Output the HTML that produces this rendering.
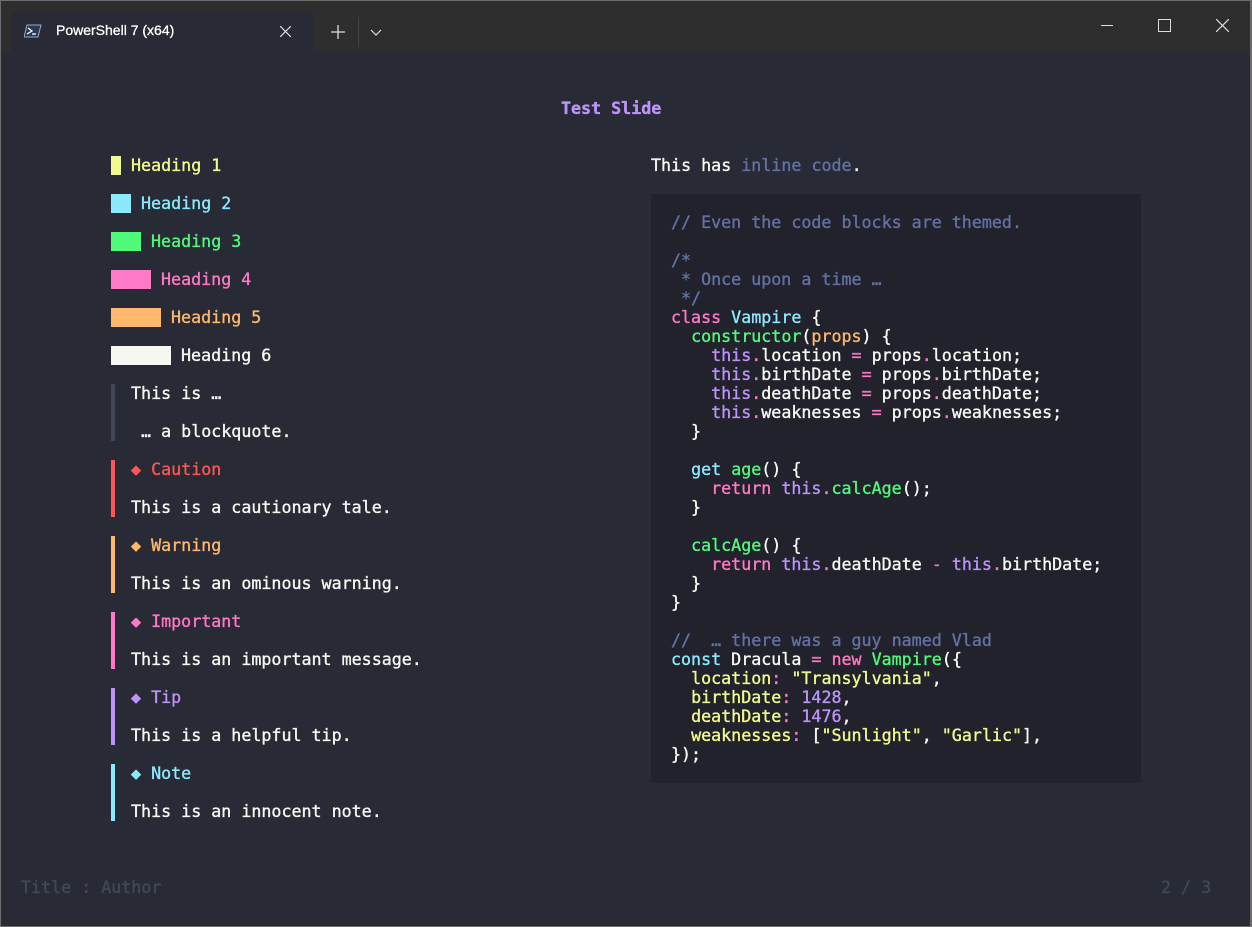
<!DOCTYPE html>
<html><head><meta charset="utf-8"><style>
*{margin:0;padding:0;box-sizing:border-box}
body{width:1252px;height:927px;background:#6e6e6e;overflow:hidden;position:relative;font-family:"Liberation Mono",monospace}
#win{position:absolute;left:1px;top:1px;width:1249px;height:925px;background:#282a36}
#bar{position:absolute;left:0;top:0;width:100%;height:50px;background:#2e2e2e}
#tab{position:absolute;left:10px;top:10px;width:302px;height:40px;background:#282a36;border-radius:8px 8px 0 0}
#tab .t{position:absolute;left:45px;top:11px;font:14px "Liberation Sans",sans-serif;color:#fff;-webkit-text-stroke:0.3px #fff}
pre{position:absolute;font-size:16.67px;line-height:19px;color:#f8f8f2;white-space:pre;-webkit-text-stroke:0.35px currentColor}
.b{display:inline-block;height:19px;vertical-align:top}
.q{display:inline-block;width:4px;height:19px;vertical-align:top;margin-right:6px}
.y{color:#f1fa8c}.c{color:#8be9fd}.g{color:#50fa7b}.p{color:#ff79c6}.o{color:#ffb86c}.r{color:#ff5555}.v{color:#bd93f9}.m{color:#6272a4}
</style></head><body>
<div id="win">
<div id="bar">
 <div id="tab">
  <svg style="position:absolute;left:13px;top:13px" width="18" height="14" viewBox="0 0 18 14"><path d="M3 1h14l-3 12H0z" fill="#2a3a56" stroke="#9ab" stroke-width="1"/><path d="M4 4l4 3-5 3" stroke="#fff" stroke-width="1.3" fill="none"/><path d="M8 10h4" stroke="#fff" stroke-width="1.3"/></svg>
  <span class="t">PowerShell 7 (x64)</span>
  <svg style="position:absolute;left:269px;top:15px" width="11" height="11"><path d="M0 0L11 11M11 0L0 11" stroke="#ddd" stroke-width="1.2"/></svg>
 </div>
 <svg style="position:absolute;left:330px;top:24px" width="14" height="14"><path d="M7 0v14M0 7h14" stroke="#ddd" stroke-width="1.3"/></svg>
 <div style="position:absolute;left:357px;top:16px;width:1px;height:30px;background:#444"></div>
 <svg style="position:absolute;left:369px;top:28px" width="12" height="7"><path d="M1 1l5 5 5-5" stroke="#ddd" stroke-width="1.2" fill="none"/></svg>
 <div style="position:absolute;left:1100px;top:24px;width:12px;height:1px;background:#ddd"></div>
 <div style="position:absolute;left:1157px;top:18px;width:13px;height:13px;border:1.2px solid #ddd"></div>
 <svg style="position:absolute;left:1215px;top:18px" width="13" height="13"><path d="M0 0L13 13M13 0L0 13" stroke="#ddd" stroke-width="1.2"/></svg>
</div>
<pre style="left:560px;top:97.5px;font-weight:bold" class="v">Test Slide</pre>
<pre style="left:110px;top:154.5px"><span class="b" style="width:10px;background:#f1fa8c"></span> <span class="y">Heading 1</span>

<span class="b" style="width:20px;background:#8be9fd"></span> <span class="c">Heading 2</span>

<span class="b" style="width:30px;background:#50fa7b"></span> <span class="g">Heading 3</span>

<span class="b" style="width:40px;background:#ff79c6"></span> <span class="p">Heading 4</span>

<span class="b" style="width:50px;background:#ffb86c"></span> <span class="o">Heading 5</span>

<span class="b" style="width:60px;background:#f8f8f2"></span> Heading 6

<span class="q" style="background:#44475a"></span> This is …
<span class="q" style="background:#44475a"></span>
<span class="q" style="background:#44475a"></span>  … a blockquote.

<span class="q" style="background:#ff5555"></span> <span class="r">◆ Caution</span>
<span class="q" style="background:#ff5555"></span>
<span class="q" style="background:#ff5555"></span> This is a cautionary tale.

<span class="q" style="background:#ffb86c"></span> <span class="o">◆ Warning</span>
<span class="q" style="background:#ffb86c"></span>
<span class="q" style="background:#ffb86c"></span> This is an ominous warning.

<span class="q" style="background:#ff79c6"></span> <span class="p">◆ Important</span>
<span class="q" style="background:#ff79c6"></span>
<span class="q" style="background:#ff79c6"></span> This is an important message.

<span class="q" style="background:#bd93f9"></span> <span class="v">◆ Tip</span>
<span class="q" style="background:#bd93f9"></span>
<span class="q" style="background:#bd93f9"></span> This is a helpful tip.

<span class="q" style="background:#8be9fd"></span> <span class="c">◆ Note</span>
<span class="q" style="background:#8be9fd"></span>
<span class="q" style="background:#8be9fd"></span> This is an innocent note.</pre>
<pre style="left:650px;top:154.5px">This has <span class="m">inline code</span>.</pre>
<div style="position:absolute;left:650px;top:192.5px;width:490px;height:589px;background:#21222c"></div>
<pre style="left:670px;top:211.5px"><span class="m">// Even the code blocks are themed.</span>

<span class="m">/*
 * Once upon a time …
 */</span>
<span class="p">class</span> <span class="c">Vampire</span> {
  <span class="g">constructor</span>(<span class="o">props</span>) {
    <span class="v">this</span><span class="p">.</span>location <span class="p">=</span> props<span class="p">.</span>location;
    <span class="v">this</span><span class="p">.</span>birthDate <span class="p">=</span> props<span class="p">.</span>birthDate;
    <span class="v">this</span><span class="p">.</span>deathDate <span class="p">=</span> props<span class="p">.</span>deathDate;
    <span class="v">this</span><span class="p">.</span>weaknesses <span class="p">=</span> props<span class="p">.</span>weaknesses;
  }

  <span class="c">get</span> <span class="g">age</span>() {
    <span class="p">return</span> <span class="v">this</span><span class="p">.</span><span class="g">calcAge</span>();
  }

  <span class="g">calcAge</span>() {
    <span class="p">return</span> <span class="v">this</span><span class="p">.</span>deathDate <span class="p">-</span> <span class="v">this</span><span class="p">.</span>birthDate;
  }
}

<span class="m">//  … there was a guy named Vlad</span>
<span class="c">const</span> Dracula <span class="p">=</span> <span class="p">new</span> <span class="g">Vampire</span>({
  <span class="y">location</span><span class="p">:</span> <span class="y">"Transylvania"</span>,
  <span class="y">birthDate</span><span class="p">:</span> <span class="v">1428</span>,
  <span class="y">deathDate</span><span class="p">:</span> <span class="v">1476</span>,
  <span class="y">weaknesses</span><span class="p">:</span> [<span class="y">"Sunlight"</span>, <span class="y">"Garlic"</span>],
});</pre>
<pre style="left:20px;top:876.5px;color:#44475a">Title : Author</pre>
<pre style="left:1160px;top:876.5px;color:#44475a">2 / 3</pre>
</div>
</body></html>
